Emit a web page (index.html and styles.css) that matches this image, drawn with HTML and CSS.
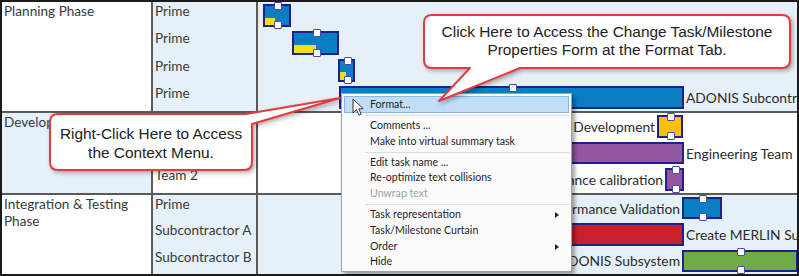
FILE: index.html
```html
<!DOCTYPE html>
<html lang="en">
<head>
    <meta charset="UTF-8">
    <title>Gantt Context Menu</title>
    <link rel="stylesheet" href="styles.css">
</head>
<body>

    <div class="chart">
        <!-- Planning phase -->
        <div class="group plan">
            <div class="phase">Planning Phase</div>
            <div class="teams tint">
                <div class="team">Prime</div>
                <div class="team">Prime</div>
                <div class="team">Prime</div>
                <div class="team">Prime</div>
            </div>
            <div class="gantt tint">
                <div class="lane">
                    <div class="bar blue ht hb" style="left:5px;width:28px"><span class="fill" style="width:42%"></span></div>
                </div>
                <div class="lane">
                    <div class="bar blue ht hb" style="left:34px;width:47px"><span class="fill" style="width:51%"></span></div>
                </div>
                <div class="lane">
                    <div class="bar blue ht hb" style="left:80px;width:17px"><span class="fill" style="width:46%"></span></div>
                </div>
                <div class="lane">
                    <div class="bar blue ht" style="left:81px;width:345px"><span class="lbl after">ADONIS Subcontract</span></div>
                </div>
            </div>
        </div>

        <!-- Development phase -->
        <div class="group dev">
            <div class="phase tint">Development Phase</div>
            <div class="teams">
                <div class="team">Prime</div>
                <div class="team">Team 1</div>
                <div class="team">Team 2</div>
            </div>
            <div class="gantt">
                <div class="lane">
                    <div class="bar gold ht hb" style="left:399px;width:26px"><span class="lbl before">Engineering Development</span></div>
                </div>
                <div class="lane">
                    <div class="bar purple" style="left:222px;width:204px"><span class="lbl after">Engineering Team</span></div>
                </div>
                <div class="lane">
                    <div class="bar purple ht hb" style="left:407px;width:19px"><span class="lbl before">Performance calibration</span></div>
                </div>
            </div>
        </div>

        <!-- Integration & testing phase -->
        <div class="group test">
            <div class="phase">Integration &amp; Testing Phase</div>
            <div class="teams tint">
                <div class="team">Prime</div>
                <div class="team">Subcontractor A</div>
                <div class="team">Subcontractor B</div>
            </div>
            <div class="gantt tint">
                <div class="lane">
                    <div class="bar blue ht hb" style="left:424px;width:40px"><span class="lbl before">Performance Validation</span></div>
                </div>
                <div class="lane">
                    <div class="bar red" style="left:222px;width:204px"><span class="lbl after">Create MERLIN Subsystem</span></div>
                </div>
                <div class="lane">
                    <div class="bar green ht hb" style="left:424px;width:116px"><span class="lbl before">Integrate ADONIS Subsystem</span></div>
                </div>
            </div>
        </div>
    </div>

    <!-- Context menu -->
    <div class="menu">
        <div class="item active">Format...</div>
        <div class="sep"></div>
        <div class="item">Comments ...</div>
        <div class="item">Make into virtual summary task</div>
        <div class="sep"></div>
        <div class="item">Edit task name ...</div>
        <div class="item">Re-optimize text collisions</div>
        <div class="item disabled">Unwrap text</div>
        <div class="sep"></div>
        <div class="item sub">Task representation</div>
        <div class="item">Task/Milestone Curtain</div>
        <div class="item sub">Order</div>
        <div class="item">Hide</div>
    </div>

    <svg class="cursor" width="13" height="19" viewBox="0 0 13 19">
        <path d="M1 1 L1 15 L4.5 11.6 L7 17.2 L9.2 16.2 L6.8 10.8 L11.2 10.8 Z" fill="#fff" stroke="#333" stroke-width="1" stroke-linejoin="round"/>
    </svg>

    <!-- Callouts -->
    <svg class="callouts" width="799" height="276" viewBox="0 0 799 276">
        <path d="M432 15 H782 Q790 15 790 23 V60 Q790 68 782 68 H520 L439 101 L470 68 H432 Q424 68 424 60 V23 Q424 15 432 15 Z"/>
        <path d="M58 114 H246 L340 98 L252 124 V162 Q252 170 244 170 H58 Q50 170 50 162 V122 Q50 114 58 114 Z"/>
    </svg>
    <div class="note note-top">Click Here to Access the Change Task/Milestone<br>Properties Form at the Format Tab.</div>
    <div class="note note-left">Right-Click Here to Access<br>the Context Menu.</div>

</body>
</html>
```

FILE: styles.css
```css
* { margin: 0; padding: 0; box-sizing: border-box; }
body {
    width: 799px;
    height: 276px;
    overflow: hidden;
    background: #fff;
    font-family: 'Lato', 'Open Sans', sans-serif;
    position: relative;
}
.chart {
    width: 799px;
    height: 276px;
    border: 2px solid #1b1b1b;
    display: flex;
    flex-direction: column;
    overflow: hidden;
}
.group {
    display: grid;
    grid-template-columns: 151px 105px 1fr;
    border-bottom: 2px solid #5a5a5a;
}
.group:last-child { border-bottom: none; }
.plan { height: 111px; }
.dev { height: 82px; }
.test { height: 79px; }
.tint { background: #e6f0f8; }
.phase {
    border-right: 2px solid #5a5a5a;
    padding: 1px 2px;
    font-size: 13.6px;
    line-height: 17px;
    color: #3a3a3a;
}
.teams {
    border-right: 2px solid #5a5a5a;
    display: flex;
    flex-direction: column;
}
.team {
    flex: 1;
    padding: 1px 2px 0;
    font-size: 13.6px;
    line-height: 17px;
    color: #3a3a3a;
    white-space: nowrap;
}
.gantt {
    display: flex;
    flex-direction: column;
    overflow: hidden;
}
.lane {
    flex: 1;
    position: relative;
}

/* Bars */
.bar {
    position: absolute;
    top: 2px;
    bottom: 2px;
    border: 2px solid #1f2090;
}
.blue { background: #0b7dc3; }
.gold { background: #ffc000; }
.purple { background: #93579f; }
.red { background: #c9202b; }
.green { background: #6fac46; }
.fill {
    position: absolute;
    left: 0;
    bottom: 0;
    height: 40%;
    background: #f7dc1c;
}
.ht::before, .hb::after {
    content: '';
    position: absolute;
    left: calc(50% - 3px);
    width: 6px;
    height: 6px;
    background: #fff;
    border: 1px solid #4b4ba8;
    border-radius: 1px;
}
.ht::before { top: -4px; }
.hb::after { bottom: -4px; }
.lbl {
    position: absolute;
    top: -2px;
    bottom: -2px;
    display: flex;
    align-items: center;
    white-space: nowrap;
    font-size: 13.8px;
    color: #2b2b2b;
}
.lbl.after { left: 100%; margin-left: 4px; }
.lbl.before { right: 100%; margin-right: 4px; }

/* Context menu */
.menu {
    position: absolute;
    left: 341px;
    top: 93px;
    width: 231px;
    padding: 2px 2px 1px;
    background: #fbfbfb;
    border: 1px solid #a0a0a0;
    box-shadow: 3px 3px 4px rgba(0, 0, 0, 0.35);
    font-family: 'Lato', sans-serif;
    font-size: 10.6px;
    color: #1e1e1e;
}
.item {
    position: relative;
    height: 15.8px;
    line-height: 15.8px;
    padding-left: 26px;
    white-space: nowrap;
}
.item.active {
    height: 17px;
    line-height: 15px;
    padding-left: 25px;
    background: #c1def8;
    border: 1px solid #86b9e8;
}
.item.disabled { color: #a0a0a0; }
.item.sub::after {
    content: '';
    position: absolute;
    right: 10px;
    top: 5px;
    border-left: 4px solid #222;
    border-top: 3px solid transparent;
    border-bottom: 3px solid transparent;
}
.sep {
    height: 1px;
    background: #dcdcdc;
    margin: 2px 0 2px 21px;
}
.cursor {
    position: absolute;
    left: 352px;
    top: 98px;
}

/* Callouts */
.callouts {
    position: absolute;
    left: 0;
    top: 0;
    filter: drop-shadow(2px 2px 2px rgba(0, 0, 0, 0.3));
}
.callouts path {
    fill: #fff;
    stroke: #e8393e;
    stroke-width: 2;
    stroke-linejoin: round;
}
.note {
    position: absolute;
    font-family: 'Liberation Sans', Arial, sans-serif;
    font-size: 15.4px;
    color: #222;
    text-align: center;
}
.note-top {
    left: 424px;
    top: 23px;
    width: 366px;
    line-height: 18px;
}
.note-left {
    left: 50px;
    top: 124px;
    width: 202px;
    line-height: 19px;
}
```
